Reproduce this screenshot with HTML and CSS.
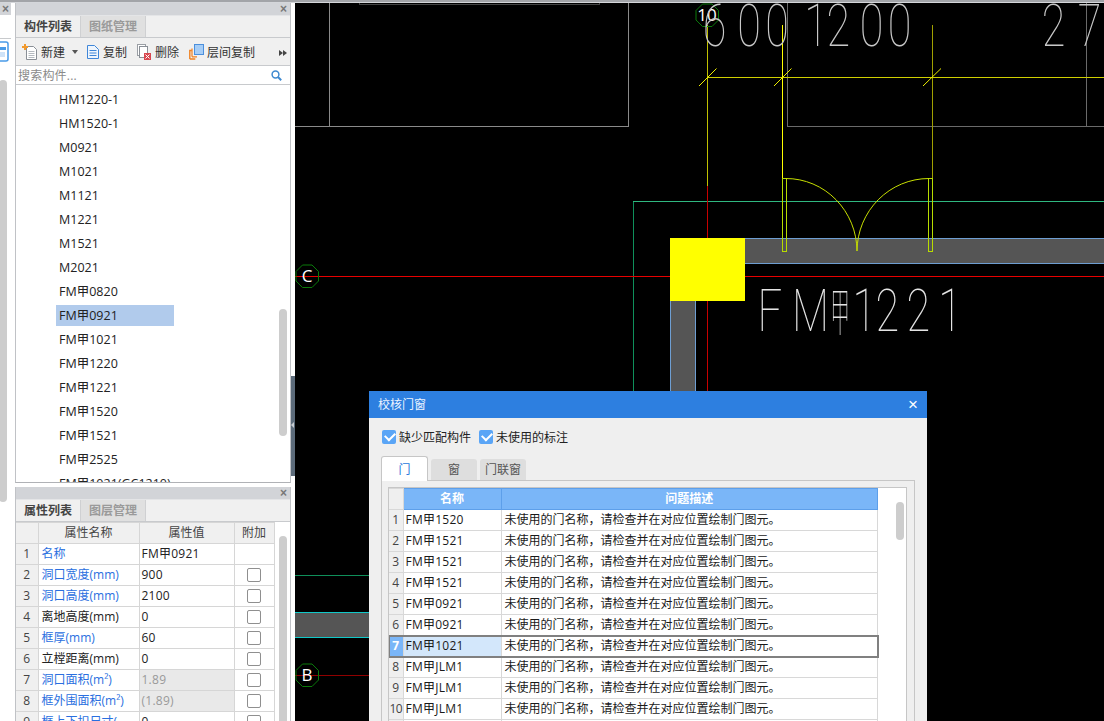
FILE: index.html
```html
<!DOCTYPE html>
<html lang="zh">
<head>
<meta charset="utf-8">
<title>校核门窗</title>
<link rel="stylesheet" href="styles.css">
</head>
<body>
<div class="topstrip"></div>
<div class="app">
  <aside class="side">
    <div class="sliver">
      <div class="panelhead"><span class="closex">×</span></div>
      <div class="sliver-tools">
        <svg class="sliver-icon" width="9" height="22" viewBox="0 0 9 22"><rect x="-6" y="1" width="14" height="19" rx="2" fill="#fff" stroke="#4a9be8" stroke-width="1.5"/><rect x="-3" y="6" width="9" height="3" fill="#4a9be8"/><rect x="-3" y="11" width="8" height="5" fill="#cfe3f8"/></svg>
      </div>
      <div class="thumb sliver-thumb"></div>
    </div>
    <div class="panels">
      <section class="panel list-panel">
        <div class="panelhead"><span class="closex">×</span></div>
        <div class="tabs">
          <div class="tab active">构件列表</div>
          <div class="tab">图纸管理</div>
        </div>
        <div class="toolbar">
          <span class="tool tool-new">
            <svg width="16" height="16" viewBox="0 0 16 16"><path d="M4.5 2.5h7l3 3v10h-10z" fill="#fff" stroke="#8a8f96"/><path d="M6.500 7.500h6M6.500 9.500h6M6.500 11.500h6M6.500 13.500h6" stroke="#b5bac0"/><path d="M0 2h2V0h2v2h2v2H4v2H2V4H0z" fill="#f39a2c"/></svg>
            <span class="tool-label">新建</span><i class="caret"></i>
          </span>
          <span class="tool tool-copy">
            <svg width="14" height="16" viewBox="0 0 14 16"><path d="M1.500 1.500h7l4 4v9h-11z" fill="#eef5fd" stroke="#3f86d8"/><path d="M3.500 6.500h7M3.500 9h7M3.500 11.500h7" stroke="#3f86d8"/></svg>
            <span class="tool-label">复制</span>
          </span>
          <span class="tool tool-del">
            <svg width="15" height="16" viewBox="0 0 15 16"><rect x="0.500" y="0.500" width="8" height="11" fill="#fff" stroke="#9a9ea4"/><rect x="2.500" y="2.500" width="8" height="11" fill="#fff" stroke="#8a8f96"/><rect x="7" y="9" width="7" height="7" fill="#d9474f"/><path d="M8.500 10.500l4 4m0-4l-4 4" stroke="#fff"/></svg>
            <span class="tool-label">删除</span>
          </span>
          <span class="tool tool-floor">
            <svg width="15" height="16" viewBox="0 0 15 16"><path d="M.8 15V6.500h2M.8 15h5.500" fill="none" stroke="#f08020" stroke-width="1.400"/><path d="M3 12.800V4.500M3 12.800h5" fill="none" stroke="#f08020" stroke-width="1.200"/><rect x="5.500" y="0.500" width="9" height="10" fill="#a6cdf6" stroke="#4b8fdc"/></svg>
            <span class="tool-label">层间复制</span>
          </span>
          <span class="tool-more"><i></i><i></i></span>
        </div>
        <div class="search">
          <span class="placeholder">搜索构件...</span>
          <svg width="11" height="11" viewBox="0 0 11 11"><circle cx="4.500" cy="4.500" r="3.400" fill="none" stroke="#3f8ad0" stroke-width="1.500"/><path d="M7 7l3.200 3.200" stroke="#3f8ad0" stroke-width="2"/></svg>
        </div>
        <ul class="tree">
          <li>HM1220-1</li>
          <li>HM1520-1</li>
          <li>M0921</li>
          <li>M1021</li>
          <li>M1121</li>
          <li>M1221</li>
          <li>M1521</li>
          <li>M2021</li>
          <li>FM甲0820</li>
          <li class="picked">FM甲0921</li>
          <li>FM甲1021</li>
          <li>FM甲1220</li>
          <li>FM甲1221</li>
          <li>FM甲1520</li>
          <li>FM甲1521</li>
          <li>FM甲2525</li>
          <li>FM甲1021(GC1210)</li>
        </ul>
        <div class="thumb list-thumb"></div>
      </section>
      <section class="panel prop-panel">
        <div class="panelhead"><span class="closex">×</span></div>
        <div class="tabs">
          <div class="tab active">属性列表</div>
          <div class="tab">图层管理</div>
        </div>
        <table class="props">
          <thead>
            <tr><th class="c-n"></th><th class="c-name">属性名称</th><th class="c-val">属性值</th><th class="c-add">附加</th></tr>
          </thead>
          <tbody>
            <tr><th>1</th><td class="link">名称</td><td class="val">FM甲0921</td><td></td></tr>
            <tr><th>2</th><td class="link">洞口宽度(mm)</td><td class="val">900</td><td><i class="box"></i></td></tr>
            <tr><th>3</th><td class="link">洞口高度(mm)</td><td class="val">2100</td><td><i class="box"></i></td></tr>
            <tr><th>4</th><td>离地高度(mm)</td><td class="val">0</td><td><i class="box"></i></td></tr>
            <tr><th>5</th><td class="link">框厚(mm)</td><td class="val">60</td><td><i class="box"></i></td></tr>
            <tr><th>6</th><td>立樘距离(mm)</td><td class="val">0</td><td><i class="box"></i></td></tr>
            <tr><th>7</th><td class="link">洞口面积(m²)</td><td class="val off">1.89</td><td><i class="box"></i></td></tr>
            <tr><th>8</th><td class="link">框外围面积(m²)</td><td class="val off">(1.89)</td><td><i class="box"></i></td></tr>
            <tr><th>9</th><td class="link">框上下扣尺寸(</td><td class="val">0</td><td><i class="box"></i></td></tr>
          </tbody>
        </table>
        <div class="thumb prop-thumb"></div>
      </section>
    </div>
    <div class="grip"><i></i></div>
  </aside>

  <main class="canvas">
    <svg class="cad" width="809" height="718" viewBox="295 3 809 718">
      <g class="crisp" fill="none" stroke-width="1">
        <path d="M359.500 3v1.500H599.500V3" stroke="#444444"/>
        <path d="M329.500 0V126.500M628.500 0V126.500M295 126.500H628.500" stroke="#8a8a8a"/>
        <path d="M787.500 0V126.500H1104M1086.500 0V126.500" stroke="#6a6a6a"/>
        <path d="M633.500 391V201.500" stroke="#0f8f5a"/>
        <path d="M633 201.500H1104" stroke="#2fb880"/>
        <path d="M295 575.500H369" stroke="#0f8f5a"/>
        <path d="M295 276.500H1104" stroke="#e80000"/>
        <path d="M707.500 186V391" stroke="#c80000"/>
        <path d="M295 675.500H369" stroke="#900000"/>
      </g>
      <rect class="wall" x="745" y="239" width="359" height="24"/>
      <path class="crisp" d="M745 238.500H1104M745 263.500H1104" stroke="#6e9ed2" fill="none"/>
      <rect class="wall" x="670" y="301" width="25" height="90"/>
      <path class="crisp" d="M670.500 301V391M695.500 301V391" stroke="#6e9ed2" fill="none"/>
      <rect class="wall" x="295" y="613" width="74" height="24"/>
      <path class="crisp" d="M295 612.500H369M295 637.500H369" stroke="#10c8c8" fill="none"/>
      <rect x="670" y="238" width="75" height="63" fill="#ffff00"/>
      <g fill="none">
        <path class="crisp" d="M707.500 25V186" stroke="#c0c000"/>
        <path class="crisp" d="M782.500 25V178" stroke="#ffff00"/>
        <path class="crisp" d="M932.500 25V251" stroke="#a0a000"/>
        <path class="crisp" d="M707 77.500H1104" stroke="#d0d000"/>
        <path d="M699 86L716.500 68.500M774 86L791.500 68.500M923 86L941 68.500" stroke="#f0f000"/>
        <path class="crisp" d="M782.500 178.500H786.500V251H782.500ZM928 178.500H932.500V251H928Z" stroke="#b8dc00"/>
        <path d="M786 178.500A71 73 0 0 1 857 251M929 178.500A72 73 0 0 0 857 251" stroke="#c8e000"/>
      </g>
      <g fill="none" stroke="#0a7a0a">
        <polygon points="302.500,265 312,265 318.500,271.500 318.500,281 312,287.500 302.500,287.500 296,281 296,271.500"/>
        <polygon points="702.500,4 712,4 718.500,10.500 718.500,20 712,26.500 702.500,26.500 696,20 696,10.500"/>
        <polygon points="302.500,664 312,664 318.500,670.500 318.500,680 312,686.500 302.500,686.500 296,680 296,670.500"/>
      </g>
      <text class="axis" x="307" y="282">C</text>
      <text class="axis" x="707" y="21">10</text>
      <text class="axis" x="307" y="681">B</text>
      <text class="cadtext dim" transform="translate(0 46) scale(.72 1)" x="976 1024 1063 1117 1148 1194 1233" y="0">6001200</text>
      <text class="cadtext dim" transform="translate(0 46) scale(.72 1)" x="1447 1497" y="0">27</text>
      <text class="cadtext" transform="translate(0 331) scale(.72 1)" x="1052 1100" y="0">FM</text>
      <text class="cadtext han" transform="translate(0 331) scale(.38 1)" x="2185" y="0">甲</text>
      <text class="cadtext" transform="translate(0 331) scale(.72 1)" x="1184 1216 1259 1303" y="0">1221</text>
    </svg>

    <div class="dialog">
      <div class="dlg-title"><span>校核门窗</span><b>×</b></div>
      <div class="dlg-body">
        <div class="checks">
          <label class="check"><i class="tick"></i><span class="check-label">缺少匹配构件</span></label>
          <label class="check"><i class="tick"></i><span class="check-label">未使用的标注</span></label>
        </div>
        <div class="dlg-tabs">
          <div class="dlg-tab on">门</div>
          <div class="dlg-tab">窗</div>
          <div class="dlg-tab">门联窗</div>
        </div>
        <div class="dlg-frame">
          <div class="grid-wrap">
            <table class="grid">
              <thead>
                <tr><th class="g-n"></th><th class="g-h g-name">名称</th><th class="g-h g-desc">问题描述</th></tr>
              </thead>
              <tbody>
                <tr><th>1</th><td>FM甲1520</td><td>未使用的门名称，请检查并在对应位置绘制门图元。</td></tr>
                <tr><th>2</th><td>FM甲1521</td><td>未使用的门名称，请检查并在对应位置绘制门图元。</td></tr>
                <tr><th>3</th><td>FM甲1521</td><td>未使用的门名称，请检查并在对应位置绘制门图元。</td></tr>
                <tr><th>4</th><td>FM甲1521</td><td>未使用的门名称，请检查并在对应位置绘制门图元。</td></tr>
                <tr><th>5</th><td>FM甲0921</td><td>未使用的门名称，请检查并在对应位置绘制门图元。</td></tr>
                <tr><th>6</th><td>FM甲0921</td><td>未使用的门名称，请检查并在对应位置绘制门图元。</td></tr>
                <tr class="sel"><th>7</th><td>FM甲1021</td><td>未使用的门名称，请检查并在对应位置绘制门图元。</td></tr>
                <tr><th>8</th><td>FM甲JLM1</td><td>未使用的门名称，请检查并在对应位置绘制门图元。</td></tr>
                <tr><th>9</th><td>FM甲JLM1</td><td>未使用的门名称，请检查并在对应位置绘制门图元。</td></tr>
                <tr><th class="two">10</th><td>FM甲JLM1</td><td>未使用的门名称，请检查并在对应位置绘制门图元。</td></tr>
                <tr><th></th><td></td><td></td></tr>
              </tbody>
            </table>
            <div class="thumb grid-thumb"></div>
          </div>
        </div>
      </div>
    </div>
  </main>
</div>
</body>
</html>
```
FILE: styles.css
```css
* { box-sizing: border-box; }
html, body { margin: 0; height: 100%; }
body {
  width: 1104px;
  height: 721px;
  overflow: hidden;
  background: #fff;
  font: 12px/1 "Open Sans", "Noto Sans CJK SC", sans-serif;
  color: #222;
  display: flex;
  flex-direction: column;
}
i { font-style: normal; }
.topstrip { height: 3px; flex: none; background: linear-gradient(#a2a4a8 0 2px, #d4d6da 2px); }
.app { flex: 1; display: flex; min-height: 0; }

/* left side */
.side { width: 295px; flex: none; display: flex; position: relative; background: #fff; }
.sliver { width: 11px; flex: none; position: relative; overflow: hidden; }
.sliver-tools { height: 24px; margin-top: 23px; border-top: 1px solid #c8cacd; overflow: hidden; }
.sliver-icon { display: block; margin-top: 2px; }
.panels { width: 276px; margin-left: 4px; flex: none; display: flex; flex-direction: column; }
.panel { position: relative; border: 1px solid #c0c2c6; border-top: 0; overflow: hidden; background: #fff; }
.list-panel { height: 480px; flex: none; margin-bottom: 4px; border-bottom: 1px solid #b0b2b6; }
.prop-panel { flex: 1; min-height: 0; border-bottom: 0; }
.panelhead {
  height: 12px;
  background: #d2d4d8;
  position: relative;
}
.closex {
  position: absolute;
  right: 3px;
  top: 0;
  font: bold 12px/12px "Liberation Sans", sans-serif;
  color: #777;
}
.sliver .closex { right: 2px; }
.tabs { height: 23px; background: #f0f0f0; display: flex; border-top: 1px solid #e4e5e7; border-bottom: 1px solid #c8cacd; }
.tab {
  width: 65px;
  background: #e0e0e0;
  color: #9a9a9a;
  text-align: center;
  font-weight: 700;
  line-height: 21px;
  border-right: 1px solid #cfd0d2;
}
.tab.active { background: #f0f0f0; color: #444; }
.toolbar {
  height: 28px;
  background: #f0f0f0;
  border-bottom: 1px solid #c8cacd;
  display: flex;
  align-items: center;
  position: relative;
  padding-left: 6px;
  color: #333;
}
.tool { display: flex; align-items: center; gap: 3px; white-space: nowrap; }
.tool-label { padding-top: 2px; }
.tool-new { width: 64px; }
.tool-copy { width: 51px; }
.tool-del { width: 52px; }
.caret { width: 0; height: 0; margin-left: 4px; border: 3px solid transparent; border-top: 4px solid #555; border-bottom: 0; }
.tool-more { position: absolute; right: 3px; top: 12px; display: flex; }
.tool-more i { width: 0; height: 0; border-left: 4px solid #444; border-top: 3px solid transparent; border-bottom: 3px solid transparent; }
.search {
  height: 19px;
  border-bottom: 1px solid #c8cacd;
  display: flex;
  align-items: center;
  justify-content: space-between;
  padding: 1px 8px 0 2px;
  color: #8a8a8a;
}
.placeholder { letter-spacing: .2px; }
.tree { list-style: none; margin: 0; padding: 4px 0 0 40px; height: 398px; overflow: hidden; font-size: 12.500px; }
.tree li { height: 24px; width: 118px; padding-left: 3px; line-height: 22px; color: #222; white-space: nowrap; }
.tree li.picked { height: 21px; margin-bottom: 3px; line-height: 21px; background: #b1cbec; }
.thumb { position: absolute; background: #cdcdcd; border-radius: 4px; width: 8px; }
.sliver-thumb { left: -1px; top: 77px; height: 422px; }
.list-thumb { left: 263px; top: 306px; height: 127px; }
.prop-thumb { left: 263px; top: 49px; height: 240px; }

.props { border-collapse: collapse; table-layout: fixed; width: 258px; }
.props th, .props td {
  height: 21px;
  padding: 0;
  border: 1px solid #d6d6d6;
  border-left: 0;
  font-weight: 400;
  white-space: nowrap;
  overflow: hidden;
}
.props th { background: #f0f0f0; text-align: center; color: #444; }
.props td { padding-left: 3px; }
.props td.val { padding-left: 2px; letter-spacing: .25px; }
.props td:last-child { text-align: center; padding: 0; }
.c-n { width: 22px; }
.c-name { width: 101px; }
.c-val { width: 95px; }
.c-add { width: 40px; }
.link { color: #2a6fe0; }
.props td.off { background: #e9e9e9; color: #9a9a9a; }
.box { display: inline-block; width: 14px; height: 14px; border: 1px solid #8f8f8f; border-radius: 2px; background: #fff; vertical-align: middle; }

.grip { position: absolute; left: 291px; top: 373px; width: 4px; height: 100px; background: #5c6b7a; }
.grip i { position: absolute; left: 0; top: 46px; width: 0; height: 0; border-right: 3px solid #c8ccd0; border-top: 3px solid transparent; border-bottom: 3px solid transparent; }

/* drawing */
.canvas { flex: 1; position: relative; background: #000; overflow: hidden; }
.cad { position: absolute; left: 0; top: 0; display: block; }
.crisp { shape-rendering: crispEdges; }
.wall { fill: #555; }
.axis { fill: #fff; font: 400 17px "Open Sans", sans-serif; text-anchor: middle; }
.cadtext { fill: #e4e4e4; font: 100 60px "Roboto", "Noto Sans CJK SC", sans-serif; will-change: transform; }
.cadtext.dim { fill: #c8c8c8; }
.cadtext.han { font-size: 52px; }

/* dialog */
.dialog { position: absolute; left: 74px; top: 388px; width: 558px; height: 340px; background: #efefef; }
.dlg-title { height: 27px; background: #2d7fe0; color: #eaf3ff; display: flex; align-items: center; justify-content: space-between; padding: 0 9px; }
.dlg-title b { font: 400 17px/17px "Liberation Sans", sans-serif; color: #fff; }
.dlg-body { padding: 12px 12px 0; }
.checks { display: flex; gap: 8px; height: 14px; margin-left: 1px; }
.check { display: flex; align-items: center; gap: 3px; color: #222; line-height: 14px; }
.check-label { padding-top: 2px; }
.tick { width: 14px; height: 14px; background: #5aa5f6; border-radius: 2px; position: relative; }
.tick::after { content: ""; position: absolute; left: 3px; top: 2px; width: 8px; height: 5px; border: solid #fff; border-width: 0 0 2px 2px; transform: rotate(-45deg); }
.dlg-tabs { display: flex; gap: 3px; margin-top: 12px; height: 25px; align-items: flex-end; position: relative; z-index: 1; }
.dlg-tab { width: 46px; height: 21px; background: #dedede; border-radius: 3px 3px 0 0; text-align: center; line-height: 22px; color: #555; margin-bottom: 1px; }
.dlg-tab.on { width: 47px; height: 25px; margin-bottom: 0; background: #fff; border: 1px solid #c6c6c6; border-bottom: 0; line-height: 25px; color: #2a78dc; }
.dlg-frame { margin-top: -1px; width: 534px; height: 300px; border: 1px solid #c6c6c6; border-bottom: 0; padding: 6px 7px 0 6px; background: #efefef; }
.grid-wrap { position: relative; width: 519px; height: 260px; border: 1px solid #c6c6c6; background: #fff; overflow: hidden; }
.grid { border-collapse: collapse; table-layout: fixed; width: 489px; }
.grid th, .grid td { height: 21px; padding: 0; border: 1px solid #d8d8d8; border-left: 0; font-weight: 400; white-space: nowrap; overflow: hidden; }
.grid thead th { height: 21px; }
.grid tbody th { background: #efefef; color: #444; text-align: center; }
.grid tbody th.two { letter-spacing: -.5px; }
.grid td { padding-left: 3px; color: #1a1a1a; }
.grid td:nth-child(2) { padding-left: 2px; letter-spacing: .25px; }
.g-n { width: 14px; background: #efefef; }
.grid th.g-name { width: 98px; }
.grid th.g-h { background: #7ab6f8; color: #fff; font-weight: 700; text-align: center; border: 1px solid #5d9fea; }
.sel { outline: 2px solid #808080; outline-offset: -1px; }
.grid .sel th { background: #7ab6f8; color: #fff; font-weight: 700; }
.grid .sel td:nth-child(2) { background: #d3e7fb; }
.grid-thumb { left: 507px; top: 14px; height: 38px; }
```
